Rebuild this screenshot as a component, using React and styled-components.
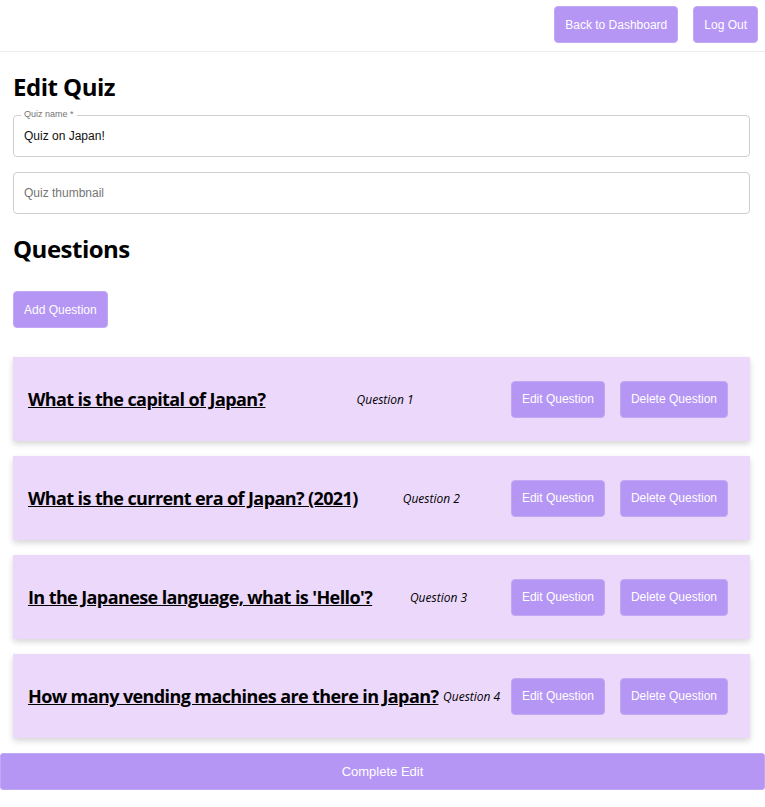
import styled, { createGlobalStyle } from 'styled-components';

const questions = [
  { id: 1, text: 'What is the capital of Japan?' },
  { id: 2, text: 'What is the current era of Japan? (2021)' },
  { id: 3, text: "In the Japanese language, what is 'Hello'?" },
  { id: 4, text: 'How many vending machines are there in Japan?' },
];

const App = () => {
  return (
    <>
      <GlobalStyle />
      <TopBar>
        <PurpleButton>Back to Dashboard</PurpleButton>
        <PurpleButton>Log Out</PurpleButton>
      </TopBar>

      <Main>
        <Heading>Edit Quiz</Heading>
        <Field $gap={11}>
          <FieldLabel>Quiz name *</FieldLabel>
          <FieldInput defaultValue="Quiz on Japan!" />
        </Field>
        <Field $gap={15}>
          <FieldInput placeholder="Quiz thumbnail" />
        </Field>

        <Heading>Questions</Heading>
        <AddRow>
          <PurpleButton>Add Question</PurpleButton>
        </AddRow>

        <CardList>
          {questions.map((q) => (
            <Card key={q.id}>
              <CardTitle href="#">{q.text}</CardTitle>
              <QuestionNo>Question {q.id}</QuestionNo>
              <CardActions>
                <PurpleButton>Edit Question</PurpleButton>
                <PurpleButton>Delete Question</PurpleButton>
              </CardActions>
            </Card>
          ))}
        </CardList>
      </Main>

      <CompleteButton>Complete Edit</CompleteButton>
    </>
  );
};

export default App;

// ----------------------
// Styled Components
// ----------------------

const GlobalStyle = createGlobalStyle`
  body {
    margin: 0;
    background: #ffffff;
    font-family: 'Open Sans', 'Noto Sans', sans-serif;
    color: #000;
  }
`;

const TopBar = styled.header`
  display: flex;
  justify-content: flex-end;
  gap: 15px;
  padding: 6px 7px 8px;
  border-bottom: 1px solid #ececec;
`;

const PurpleButton = styled.button`
  background-color: #b596f5;
  color: #ffffff;
  border: 1px solid #c1a8f4;
  border-radius: 4px;
  height: 37px;
  padding: 0 10px;
  font-family: 'Liberation Sans', Arial, sans-serif;
  font-size: 12px;
  cursor: pointer;
  white-space: nowrap;
`;

const Main = styled.main`
  padding: 0 15px 0 13px;
`;

const Heading = styled.h2`
  margin: 18px 0 0;
  font-size: 24px;
  font-weight: 700;
  line-height: 34px;
  letter-spacing: -0.5px;
`;

const Field = styled.div`
  position: relative;
  margin-top: ${(p) => p.$gap}px;
`;

const FieldLabel = styled.span`
  position: absolute;
  top: -6px;
  left: 8px;
  padding: 0 3px;
  background: #fff;
  font-family: 'Liberation Sans', Arial, sans-serif;
  font-size: 9px;
  line-height: 11px;
  color: #757575;
`;

const FieldInput = styled.input`
  display: block;
  box-sizing: border-box;
  width: 100%;
  height: 42px;
  padding: 0 10px;
  border: 1px solid #cfcfcf;
  border-radius: 4px;
  font-family: 'Liberation Sans', Arial, sans-serif;
  font-size: 12px;
  color: #111;
  outline: none;

  &::placeholder {
    color: #757575;
  }
`;

const AddRow = styled.div`
  margin-top: 25px;
`;

const CardList = styled.div`
  display: flex;
  flex-direction: column;
  gap: 15px;
  margin-top: 29px;
`;

const Card = styled.div`
  display: flex;
  align-items: center;
  justify-content: space-between;
  height: 84px;
  padding: 0 22px 0 15px;
  background-color: #ecd8fb;
  box-shadow: 0 3px 6px rgba(0, 0, 0, 0.16);
`;

const CardTitle = styled.a`
  font-size: 18px;
  font-weight: 700;
  color: #000;
  text-decoration: underline;
  white-space: nowrap;
  letter-spacing: -0.6px;
`;

const QuestionNo = styled.i`
  margin-left: 4px;
  font-size: 12px;
  white-space: nowrap;
`;

const CardActions = styled.div`
  display: flex;
  flex-shrink: 0;
  gap: 15px;
  margin-left: 10px;
`;

const CompleteButton = styled(PurpleButton)`
  display: block;
  width: 100%;
  margin-top: 15px;
  border-radius: 3px;
  font-size: 13px;
`;
